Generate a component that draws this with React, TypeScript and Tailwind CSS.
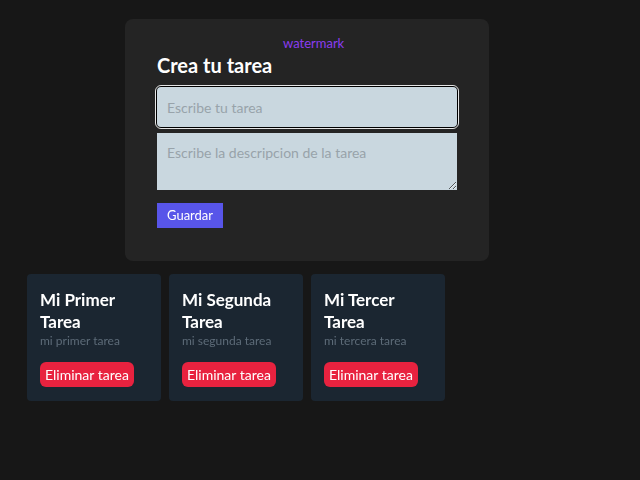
import React from 'react';

const tasks = [
  { id: 1, title: 'Mi Primer Tarea', description: 'mi primer tarea' },
  { id: 2, title: 'Mi Segunda Tarea', description: 'mi segunda tarea' },
  { id: 3, title: 'Mi Tercer Tarea', description: 'mi tercera tarea' },
];

export default function App() {
  return (
    <div className="min-h-screen bg-[#171717] pt-[19px] font-['Lato',sans-serif]">
      <form className="ml-[125px] w-[364px] rounded-lg bg-[#242424] px-8 pt-[16px] pb-[33px]">
        <div className="ml-[126px] text-[13px] leading-4 text-[#8b3cf0]">watermark</div>
        <h1 className="mb-[8px] text-[20px] leading-7 font-bold text-white">Crea tu tarea</h1>
        <input
          autoFocus
          placeholder="Escribe tu tarea"
          className="block h-[40px] w-[300px] rounded-sm bg-[#c9d7df] px-[10px] text-[14px] text-[#333] placeholder-[#98a3aa] outline-1 outline-offset-1 outline-[#e5e5e5] ring-1 ring-black"
        />
        <textarea
          placeholder="Escribe la descripcion de la tarea"
          className="mt-[6px] block h-[57px] w-[300px] bg-[#c9d7df] px-[10px] py-[12px] text-[14px] leading-4 placeholder-[#98a3aa]"
        />
        <button className="mt-[13px] h-[25px] bg-[#5855e9] px-[10px] text-[13px] text-white">Guardar</button>
      </form>
      <div className="mt-[13px] ml-[27px] grid grid-cols-[repeat(3,134px)] gap-2">
        {tasks.map((t) => (
          <div key={t.id} className="h-[127px] rounded-sm bg-[#1b2631] px-[13px] pt-[15px]">
            <h2 className="text-[17px] leading-[22px] font-bold text-white">{t.title}</h2>
            <p className="text-[12px] leading-4 text-[#5d6b78]">{t.description}</p>
            <button className="mt-[13px] h-[25px] rounded-md bg-[#e8223f] px-[5px] text-[14px] text-white">
              Eliminar tarea
            </button>
          </div>
        ))}
      </div>
    </div>
  );
}
